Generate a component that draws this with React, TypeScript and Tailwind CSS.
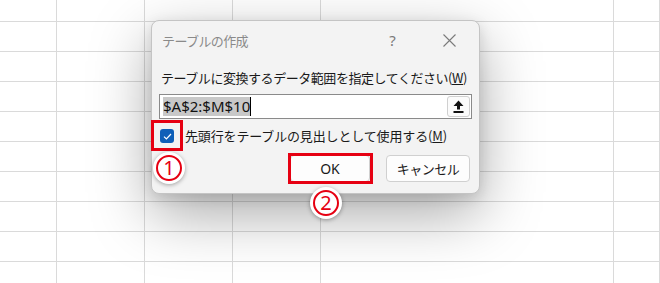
import React from "react";

const cols = ["w-[57px]", "w-[88px]", "w-[88px]", "w-[88px]", "w-[293px]", "flex-1"];
const rows = ["h-[22px]", "h-[30px]", "h-[30px]", "h-[30px]", "h-[30px]", "h-[30px]", "h-[30px]", "h-[30px]", "h-[30px]", "h-[30px]"];

function Sheet() {
  return (
    <div className="flex flex-col">
      {rows.map((h, r) => (
        <div key={r} className={`flex ${h}`}>
          {cols.map((w, c) => (
            <div key={c} className={`${w} h-full border-r border-b border-[#dadada]`} />
          ))}
        </div>
      ))}
    </div>
  );
}

function Marker({ n, className }: { n: string; className: string }) {
  return (
    <div
      className={`absolute w-[32px] h-[32px] rounded-full bg-white shadow-[0_1px_4px_rgba(0,0,0,0.35)] flex items-center justify-center ${className}`}
    >
      <div className="w-[26px] h-[26px] rounded-full border-[2px] border-[#e60012] flex items-center justify-center text-[#e60012] text-[20px] leading-none font-['Noto_Sans',sans-serif]">
        {n}
      </div>
    </div>
  );
}

function UploadIcon() {
  return (
    <svg width="11" height="13" viewBox="0 0 11 13">
      <path d="M5.5 0.5 L10.5 6 L7 6 L7 9.5 L4 9.5 L4 6 L0.5 6 Z" fill="#111" />
      <rect x="0.5" y="11" width="10" height="2" fill="#111" />
    </svg>
  );
}

export default function App() {
  const jp = "font-['Noto_Sans_CJK_JP',sans-serif]";
  return (
    <div className="relative w-[660px] h-[283px] overflow-hidden bg-white">
      <Sheet />

      {/* dialog */}
      <div className="absolute left-[151px] top-[20px] w-[329px] h-[174px] rounded-[8px] border border-[#c4c4c4] bg-[#f3f3f3] shadow-[0_20px_60px_rgba(0,0,0,0.34),0_4px_14px_rgba(0,0,0,0.12)]">
        <div className="flex items-center h-[39px]">
          <span className={`pl-[10px] text-[13px] tracking-[-0.6px] text-[#8a8a8a] ${jp}`}>テーブルの作成</span>
          <div className="ml-auto flex">
            <div className="w-[57px] flex justify-center text-[15px] text-[#7a7a7a] font-['Noto_Sans',sans-serif]">?</div>
            <div className="w-[57px] mr-[1px] flex justify-center items-center">
              <svg width="13" height="13" viewBox="0 0 13 13">
                <path d="M0.5 0.5 L12.5 12.5 M12.5 0.5 L0.5 12.5" stroke="#7a7a7a" strokeWidth="1.1" />
              </svg>
            </div>
          </div>
        </div>

        <div className="px-[7px]">
          <div className={`mt-[9px] pl-[2px] h-[18px] leading-[18px] text-[13px] tracking-[-0.45px] text-[#1a1a1a] ${jp}`}>
            テーブルに変換するデータ範囲を指定してください(<span className="underline">W</span>)
          </div>

          <div className="mt-[7px] h-[25px] bg-white border border-[#8a8a8a] flex items-center pl-[3px] pr-[1px]">
            <span className="bg-[#c8c8c8] text-[15px] leading-[19px] text-[#111] font-['Noto_Sans',sans-serif]">$A$2:$M$10</span>
            <span className="w-[1px] h-[19px] bg-black" />
            <div className="ml-auto w-[23px] h-[21px] rounded-[3px] border border-[#d0d0d0] bg-[#fbfbfb] flex items-center justify-center">
              <UploadIcon />
            </div>
          </div>

          <div className="mt-[7px] h-[20px] flex items-center">
            <div className="ml-[1px] w-[14px] h-[14px] rounded-[3px] bg-[#0f5fb8] flex items-center justify-center">
              <svg width="9" height="7" viewBox="0 0 9 7">
                <path d="M1 3.6 L3.4 6 L8 1" stroke="white" strokeWidth="1.2" fill="none" />
              </svg>
            </div>
            <span className={`ml-[11px] text-[13px] tracking-[-0.15px] text-[#1a1a1a] ${jp}`}>
              先頭行をテーブルの見出しとして使用する(<span className="underline">M</span>)
            </span>
          </div>

          <div className="mt-[9px] flex justify-end gap-[16px] pr-[2px]">
            <div className="w-[80px] h-[27px] rounded-[4px] border border-[#d0d0d0] bg-[#fdfdfd] flex items-center justify-center text-[14px] text-[#1a1a1a] font-['Noto_Sans',sans-serif]">
              OK
            </div>
            <div className={`w-[84px] h-[27px] rounded-[4px] border border-[#d0d0d0] bg-[#fdfdfd] flex items-center justify-center text-[13px] tracking-[-0.5px] text-[#1a1a1a] ${jp}`}>
              キャンセル
            </div>
          </div>
        </div>

        {/* highlight boxes */}
        <div className="absolute left-[-1px] top-[99px] w-[32px] h-[31px] border-[3px] border-[#e60012]" />
        <div className="absolute left-[136px] top-[132px] w-[85px] h-[31px] border-[3px] border-[#e60012]" />
      </div>

      <Marker n="1" className="left-[153px] top-[152px]" />
      <Marker n="2" className="left-[310px] top-[187px]" />
    </div>
  );
}
